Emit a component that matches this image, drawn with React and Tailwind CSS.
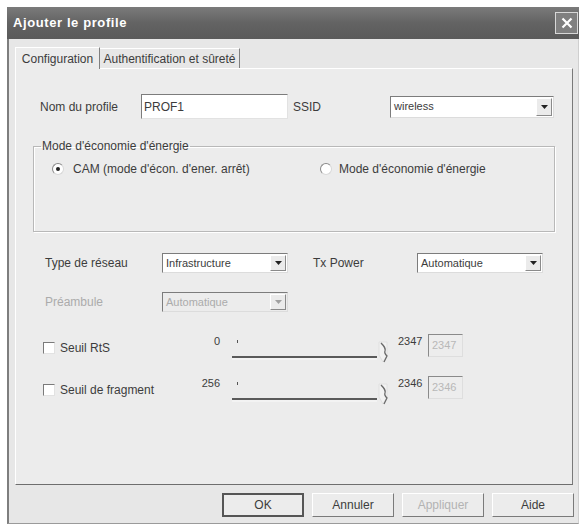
import React from "react";

// Small sunken dropdown arrow
function Arrow({ disabled }) {
  return (
    <svg width="7" height="4" viewBox="0 0 7 4">
      <path d="M0 0 L7 0 L3.5 4 Z" fill={disabled ? "#a0a0a0" : "#222"} />
    </svg>
  );
}

function Select({ value, className, disabled }) {
  return (
    <div
      className={`flex border border-t-[#7c7c7c] border-l-[#7c7c7c] border-r-[#dcdcdc] border-b-[#dcdcdc] ${
        disabled ? "bg-[#ececec]" : "bg-white"
      } ${className}`}
    >
      <span
        className={`flex-1 pl-[3px] text-[11px] flex items-center truncate ${
          disabled ? "text-[#ababab]" : "text-[#3c3c3c]"
        }`}
      >
        {value}
      </span>
      <span className="w-[16px] my-[1px] mr-[1px] bg-[#ebebeb] border border-t-white border-l-white border-r-[#8a8a8a] border-b-[#8a8a8a] flex items-center justify-center">
        <Arrow disabled={disabled} />
      </span>
    </div>
  );
}

function Radio({ checked }) {
  return (
    <span className="w-[12px] h-[12px] rounded-full bg-white border border-t-[#8a8a8a] border-l-[#8a8a8a] border-r-[#d8d8d8] border-b-[#d8d8d8] flex items-center justify-center shrink-0">
      {checked && <span className="w-[4px] h-[4px] rounded-full bg-[#222]" />}
    </span>
  );
}

function Checkbox() {
  return (
    <span className="w-[12px] h-[12px] bg-white border border-t-[#7a7a7a] border-l-[#7a7a7a] border-r-[#e2e2e2] border-b-[#e2e2e2] shrink-0" />
  );
}

// Track with a single tick mark and a pointed thumb at the right end
function Slider() {
  return (
    <svg width="170" height="28" viewBox="0 0 170 28">
      <line x1="17.5" y1="5" x2="17.5" y2="8" stroke="#555" strokeWidth="1" />
      <line x1="12" y1="22" x2="157" y2="22" stroke="#5a5a5a" strokeWidth="2" />
      <line x1="12" y1="24" x2="157" y2="24" stroke="#fafafa" strokeWidth="1" />
      <path d="M159 7 L167 7 L167 20 L163 27 L159 20 Z" fill="#f2f2f2" stroke="#e0e0e0" strokeWidth="1" />
      <path d="M161 8 C164 11 166 13 165 16 C164 18 166 20 167 21 L164 27" fill="none" stroke="#6a6a6a" strokeWidth="1.3" />
    </svg>
  );
}

function Threshold({ label, min, max }) {
  return (
    <div className="flex h-[25px]">
      <div className="w-[184px] flex items-center pl-[27px] gap-[5px]">
        <Checkbox />
        <span className="text-[12px]">{label}</span>
      </div>
      <span className="w-[20px] text-right text-[11px] leading-[12px]">{min}</span>
      <Slider />
      <span className="ml-[8px] w-[30px] text-[11px] leading-[12px]">{max}</span>
      <div className="w-[35px] h-[23px] -mt-[1px] bg-[#ededed] border border-t-[#8a8a8a] border-l-[#8a8a8a] border-r-[#dedede] border-b-[#dedede] text-[11px] text-[#b8b8b8] pl-[3px] leading-[20px]">
        {max}
      </div>
    </div>
  );
}

function Button({ children, primary, disabled }) {
  return (
    <button
      className={`w-[82px] h-[24px] text-[12px] bg-[#ececec] ${
        primary
          ? "border-2 border-[#555]"
          : "border border-t-white border-l-white border-r-[#7a7a7a] border-b-[#7a7a7a]"
      } ${disabled ? "text-[#b3b3b3]" : "text-[#3c3c3c]"}`}
    >
      {children}
    </button>
  );
}

export default function App() {
  return (
    <div className="w-[579px] h-[526px] bg-white pl-[7px] pt-[7px] font-['Liberation_Sans',Arial,sans-serif] overflow-hidden">
      <div className="w-[572px] h-[517px] flex flex-col">
        {/* Title bar */}
        <div className="h-[32px] shrink-0 bg-gradient-to-b from-[#7b7b7b] via-[#636363] to-[#5a5a5a] flex items-center pl-[6px] pr-[1px]">
          <span className="text-white font-bold text-[13px] tracking-[0.6px] flex-1">Ajouter le profile</span>
          <span className="w-[23px] h-[22px] border border-[#d8d8d8] bg-[#808080] flex items-center justify-center">
            <svg width="12" height="12" viewBox="0 0 12 12">
              <path d="M1.5 1.5 L10.5 10.5 M10.5 1.5 L1.5 10.5" stroke="#fff" strokeWidth="2.2" />
            </svg>
          </span>
        </div>

        {/* Dialog body */}
        <div className="flex-1 bg-[#e7e7e7] border-l-2 border-l-[#7e7e7e] border-r border-r-[#cfcfcf] border-b border-b-[#9a9a9a] flex flex-col text-[#3c3c3c]">
          {/* Tabs */}
          <div className="h-[29px] flex items-end pl-[6px]">
            <div className="relative z-10 w-[85px] h-[22px] -mb-[1px] bg-[#ececec] border-t border-l border-t-white border-l-white border-r border-r-[#808080] flex items-center justify-center text-[12px]">
              Configuration
            </div>
            <div className="w-[140px] h-[20px] border-t border-t-white border-r border-r-[#808080] flex items-center justify-center text-[12px]">
              Authentification et sûreté
            </div>
          </div>

          {/* Tab page */}
          <div className="ml-[6px] w-[558px] h-[417px] bg-[#ececec] border border-t-white border-l-white border-r-[#7a7a7a] border-b-[#6e6e6e] pt-[25px] flex flex-col">
            {/* Profile name + SSID */}
            <div className="flex h-[25px] items-center">
              <span className="ml-[24px] w-[101px] text-[12px]">Nom du profile</span>
              <div className="w-[147px] h-[25px] bg-white border border-t-[#7c7c7c] border-l-[#7c7c7c] border-r-[#e2e2e2] border-b-[#e2e2e2] text-[12px] pl-[2px] flex items-center">
                PROF1
              </div>
              <span className="ml-[5px] w-[97px] text-[12px]">SSID</span>
              <Select value="wireless" className="w-[164px] h-[22px]" />
            </div>

            {/* Power saving group */}
            <fieldset className="mt-[20px] ml-[17px] w-[522px] h-[93px] border border-[#b8b8b8] shadow-[inset_1px_1px_0_#fff,1px_1px_0_#fff]">
              <legend className="ml-[7px] px-[1px] text-[12px] leading-[14px]">Mode d'économie d'énergie</legend>
              <div className="mt-[9px] flex items-center h-[14px]">
                <div className="ml-[18px] w-[268px] flex items-center gap-[9px]">
                  <Radio checked />
                  <span className="text-[12px]">CAM (mode d'écon. d'ener. arrêt)</span>
                </div>
                <div className="flex items-center gap-[7px]">
                  <Radio />
                  <span className="text-[12px]">Mode d'économie d'énergie</span>
                </div>
              </div>
            </fieldset>

            {/* Network type + Tx Power */}
            <div className="mt-[21px] flex h-[20px] items-center">
              <span className="ml-[29px] w-[117px] text-[12px]">Type de réseau</span>
              <Select value="Infrastructure" className="w-[126px] h-[20px]" />
              <span className="ml-[25px] w-[104px] text-[12px]">Tx Power</span>
              <Select value="Automatique" className="w-[126px] h-[20px]" />
            </div>

            {/* Preamble (disabled) */}
            <div className="mt-[19px] flex h-[20px] items-center">
              <span className="ml-[29px] w-[117px] text-[12px] text-[#ababab]">Préambule</span>
              <Select value="Automatique" className="w-[126px] h-[20px]" disabled />
            </div>

            {/* Thresholds */}
            <div className="mt-[23px]">
              <Threshold label="Seuil RtS" min="0" max="2347" />
            </div>
            <div className="mt-[17px]">
              <Threshold label="Seuil de fragment" min="256" max="2346" />
            </div>
          </div>

          {/* Dialog buttons */}
          <div className="mt-[8px] ml-[213px] flex gap-[8px]">
            <Button primary>OK</Button>
            <Button>Annuler</Button>
            <Button disabled>Appliquer</Button>
            <Button>Aide</Button>
          </div>
        </div>
      </div>
    </div>
  );
}
